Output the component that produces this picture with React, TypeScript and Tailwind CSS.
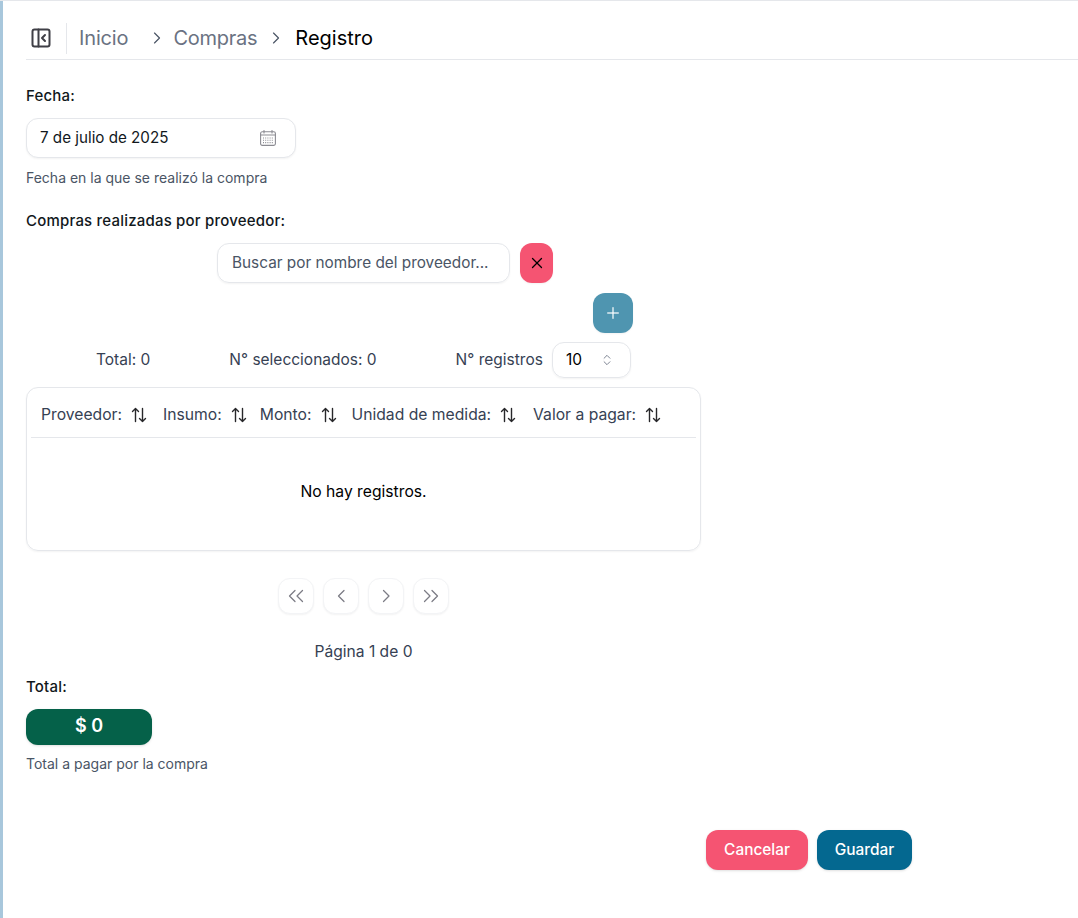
import React from 'react';
import { ChevronRight, X, Plus, ChevronsUpDown } from 'lucide-react';

const columns = [
  { label: 'Proveedor:', gap: 15 },
  { label: 'Insumo:', gap: 12 },
  { label: 'Monto:', gap: 14 },
  { label: 'Unidad de medida:', gap: 16 },
  { label: 'Valor a pagar:', gap: 0 },
];

const SortIcon = () => (
  <svg width="18" height="18" viewBox="0 0 18 18" fill="none" stroke="#27272a" strokeWidth="1.4" strokeLinecap="round" strokeLinejoin="round">
    <path d="M5.5 15.5V2.5M2.5 5.5l3-3 3 3" />
    <path d="M12.5 2.5v13M9.5 12.5l3 3 3-3" />
  </svg>
);

const SidebarIcon = () => (
  <svg width="20" height="20" viewBox="0 0 20 20" fill="none" stroke="#3f3f46" strokeWidth="2" strokeLinecap="round" strokeLinejoin="round">
    <rect x="1.5" y="1.5" width="17" height="17" rx="2" />
    <path d="M7.5 1.5v17" />
    <path d="M14 7l-3 3 3 3" />
  </svg>
);

const CalendarIcon = () => (
  <svg width="16" height="16" viewBox="0 0 16 16" fill="none" stroke="#8b8b92" strokeWidth="1.1" strokeLinecap="round">
    <rect x="0.6" y="1.8" width="14.8" height="13.6" rx="1.6" />
    <path d="M4 0.5v2.4M12 0.5v2.4M0.6 5h14.8" />
    <path d="M3 8h10M3 10.3h10M3 12.6h10" strokeDasharray="1 1.2" strokeLinecap="butt" />
  </svg>
);

const PageChevrons = ({ dir, double }: { dir: 'left' | 'right'; double?: boolean }) => (
  <svg width="16" height="14" viewBox="0 0 16 14" fill="none" stroke="#7c7c85" strokeWidth="1.25" strokeLinecap="round" strokeLinejoin="round">
    {dir === 'left' ? (
      double ? (
        <>
          <path d="M7 1.5 1.5 7 7 12.5" />
          <path d="M14.5 1.5 9 7l5.5 5.5" />
        </>
      ) : (
        <path d="M11 1.5 5.5 7l5.5 5.5" />
      )
    ) : double ? (
      <>
        <path d="M1.5 1.5 7 7l-5.5 5.5" />
        <path d="M9 1.5 14.5 7 9 12.5" />
      </>
    ) : (
      <path d="M5.5 1.5 11 7l-5.5 5.5" />
    )}
  </svg>
);

const PageButton = ({ children }: { children: React.ReactNode }) => (
  <button className="flex h-9 w-9 items-center justify-center rounded-xl border border-gray-100 bg-white shadow-xs">
    {children}
  </button>
);

export default function App() {
  return (
    <div className="flex min-h-[918px] border-t border-gray-200 bg-white font-['Inter',sans-serif] text-[#11181c]">
      <div className="w-[3px] shrink-0 bg-[#a8c7dc]" />
      <main className="flex-1 pl-[23px]">
        <header className="flex h-[59px] items-center border-b border-gray-200 pt-[16px] text-[20px]">
          <span className="ml-[5px] flex h-5 w-5 items-center"><SidebarIcon /></span>
          <span className="ml-[15px] h-[31px] w-px bg-gray-200" />
          <span className="ml-3 tracking-[-0.15px] text-gray-500">Inicio</span>
          <ChevronRight className="ml-[19px] h-5 w-5 text-gray-600" strokeWidth={1.4} />
          <span className="ml-[6px] tracking-[-0.25px] text-gray-500">Compras</span>
          <ChevronRight className="ml-[9px] h-5 w-5 text-gray-600" strokeWidth={1.4} />
          <span className="ml-[9px] text-black">Registro</span>
        </header>

        <label className="mt-[26px] block text-[15px] font-medium leading-5 tracking-[0.2px]">Fecha:</label>
        <div className="mt-[12px] flex h-10 w-[270px] items-center justify-between rounded-xl border border-gray-200 bg-white pl-[13px] pr-[19px] text-[15.2px] shadow-xs">
          <span>7 de julio de 2025</span>
          <CalendarIcon />
        </div>
        <p className="mt-[10px] text-sm leading-5 text-gray-600">Fecha en la que se realizó la compra</p>

        <label className="mt-[23px] block text-[15px] font-medium leading-5 tracking-[0.2px]">Compras realizadas por proveedor:</label>

        <section className="mt-[12px] w-[675px]">
          <div className="ml-[191px] flex items-center gap-[10px]">
            <div className="flex h-10 w-[293px] items-center rounded-xl border border-gray-200 pl-[14px] text-[15.35px] text-gray-600 shadow-xs">
              Buscar por nombre del proveedor...
            </div>
            <button className="flex h-10 w-[33px] items-center justify-center rounded-xl bg-[#f55472] text-black shadow-xs">
              <X className="h-[18px] w-[18px]" strokeWidth={1.75} />
            </button>
          </div>

          <button className="ml-[567px] mt-[10px] flex h-10 w-10 items-center justify-center rounded-xl bg-[#4f95b0] text-white/80 shadow-xs">
            <Plus className="h-[18px] w-[18px]" />
          </button>

          <div className="mt-[9px] flex h-9 items-center text-[15.5px] text-gray-700">
            <span className="ml-[70px]">Total: 0</span>
            <span className="ml-[79px]">N° seleccionados: 0</span>
            <span className="ml-[79px]">N° registros</span>
            <div className="ml-[9px] flex h-9 w-[79px] items-center justify-between rounded-xl border border-gray-200 pl-[13px] pr-[16px] text-black shadow-xs">
              10
              <ChevronsUpDown className="h-3.5 w-3.5 text-gray-500" strokeWidth={1.5} />
            </div>
          </div>

          <div className="mt-[9px] h-[164px] rounded-xl border border-gray-200 px-1 shadow-xs">
            <div className="flex h-[50px] items-center border-b border-gray-200 pl-[10px] pt-[5px] text-[15.7px] text-gray-700">
              {columns.map((col) => (
                <div key={col.label} className="flex items-center gap-[8px]" style={{ marginRight: col.gap }}>
                  {col.label}
                  <SortIcon />
                </div>
              ))}
            </div>
            <div className="flex h-[106px] items-center justify-center pt-[2px] text-[15.7px] text-black">No hay registros.</div>
          </div>

          <div className="mt-[27px] ml-[252px] flex gap-[9px]">
            <PageButton><PageChevrons dir="left" double /></PageButton>
            <PageButton><PageChevrons dir="left" /></PageButton>
            <PageButton><PageChevrons dir="right" /></PageButton>
            <PageButton><PageChevrons dir="right" double /></PageButton>
          </div>

          <p className="mt-[28px] text-center text-[15.6px] leading-5 text-gray-700">Página 1 de 0</p>
        </section>

        <label className="mt-[15px] block text-[15px] font-medium leading-5 tracking-[0.2px]">Total:</label>
        <div className="mt-[12px] flex h-9 w-[126px] items-center justify-center rounded-xl bg-[#056149] pb-[3px] text-[18px] font-semibold text-white shadow-sm">
          $ 0
        </div>
        <p className="mt-[9px] text-sm leading-5 text-gray-600">Total a pagar por la compra</p>

        <div className="ml-[680px] mt-[56px] flex gap-[9px]">
          <button className="h-10 w-[102px] rounded-xl bg-[#f55472] text-[15.4px] font-medium text-white shadow-sm">Cancelar</button>
          <button className="h-10 w-[95px] rounded-xl bg-[#046890] text-[15.4px] font-medium text-white shadow-sm">Guardar</button>
        </div>
      </main>
    </div>
  );
}
